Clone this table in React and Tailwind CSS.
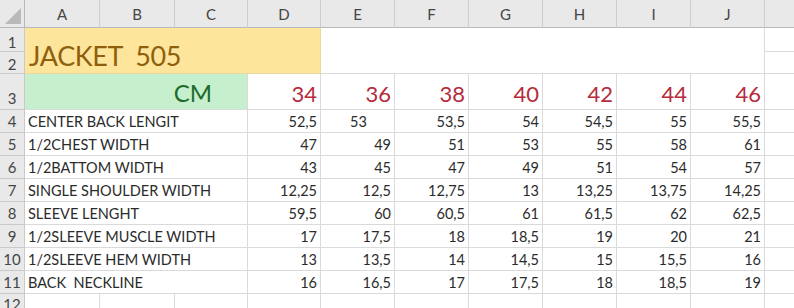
import React from "react";

const cols = ["A", "B", "C", "D", "E", "F", "G", "H", "I", "J"];
const sizes = ["34", "36", "38", "40", "42", "44", "46"];
const rows = [
  ["CENTER BACK LENGIT", ["52,5", "53", "53,5", "54", "54,5", "55", "55,5"]],
  ["1/2CHEST WIDTH", ["47", "49", "51", "53", "55", "58", "61"]],
  ["1/2BATTOM WIDTH", ["43", "45", "47", "49", "51", "54", "57"]],
  ["SINGLE SHOULDER WIDTH", ["12,25", "12,5", "12,75", "13", "13,25", "13,75", "14,25"]],
  ["SLEEVE LENGHT", ["59,5", "60", "60,5", "61", "61,5", "62", "62,5"]],
  ["1/2SLEEVE MUSCLE WIDTH", ["17", "17,5", "18", "18,5", "19", "20", "21"]],
  ["1/2SLEEVE HEM WIDTH", ["13", "13,5", "14", "14,5", "15", "15,5", "16"]],
  ["BACK  NECKLINE", ["16", "16,5", "17", "17,5", "18", "18,5", "19"]],
];

const cell = "border-r border-b border-[#dadada] bg-white";
const rowHead =
  "bg-[#e9e9e9] border-r border-b border-[#c9c9c9] flex items-end justify-center pb-[1px] text-[15px] text-[#454545] leading-none";

export default function App() {
  return (
    <div
      className="w-[794px] h-[308px] overflow-hidden bg-white grid grid-cols-[25px_75px_75px_73px_73px_74px_74px_74px_74px_74px_74px_1fr] grid-rows-[28px_24px_22px_36px_repeat(8,23px)_1fr]"
      style={{ fontFamily: "Lato, 'Open Sans', sans-serif" }}
    >
      {/* header row */}
      <div className="relative bg-[#e9e9e9] border-r border-b border-[#b8b8b8]">
        <div className="absolute right-[3px] bottom-[3px] w-0 h-0 border-l-[16px] border-l-transparent border-b-[16px] border-b-[#b9b9b9]" />
      </div>
      {cols.map((c) => (
        <div
          key={c}
          className="bg-[#e9e9e9] border-r border-b border-r-[#cdcdcd] border-b-[#b8b8b8] flex items-center justify-center text-[15px] text-[#454545] pt-[2px]"
        >
          {c}
        </div>
      ))}
      <div className="bg-[#e9e9e9] border-b border-[#b8b8b8]" />

      {/* row 1 */}
      <div className={rowHead}>1</div>
      <div className="col-span-4 row-span-2 bg-[#fde69b] border-r border-b border-[#e8d8a0] flex items-end pl-[4px] pb-[4px]">
        <span className="text-[27px] leading-none text-[#8f5f0e] tracking-[-0.4px] whitespace-pre">
          JACKET  505
        </span>
      </div>
      <div className="col-span-6 row-span-2 bg-white border-r border-b border-[#dadada]" />
      <div className="bg-white border-b border-[#dadada]" />

      {/* row 2 */}
      <div className={rowHead}>2</div>
      <div className="bg-white border-b border-[#dadada]" />

      {/* row 3 */}
      <div className={rowHead + " pb-[3px]"}>3</div>
      <div className="col-span-3 bg-[#c6efce] border-r border-b border-[#dadada] flex items-end justify-end pr-[35px] pb-[4px]">
        <span className="text-[24px] leading-none text-[#1d6b2b]">CM</span>
      </div>
      {sizes.map((s) => (
        <div key={s} className={cell + " flex items-end justify-end pr-[3px] pb-[4px]"}>
          <span className="text-[22px] leading-none text-[#b52b3b]">{s}</span>
        </div>
      ))}
      <div className="bg-white border-b border-[#dadada]" />

      {/* data rows */}
      {rows.map(([label, vals], i) => (
        <React.Fragment key={label}>
          <div className={rowHead + " pb-[3px]"}>{i + 4}</div>
          <div className={cell + " col-span-3 flex items-end pl-[3px] pb-[3px]"}>
            <span className="text-[14.5px] leading-none text-[#2b2b2b] whitespace-pre">{label}</span>
          </div>
          {vals.map((v, j) => (
            <div
              key={j}
              className={
                cell +
                " flex items-end pb-[3px] " +
                (i === 0 && j === 1 ? "justify-start pl-[29px]" : "justify-end pr-[3px]")
              }
            >
              <span className="text-[14.5px] leading-none text-[#2b2b2b]">{v}</span>
            </div>
          ))}
          <div className="bg-white border-b border-[#dadada]" />
        </React.Fragment>
      ))}

      {/* row 12 */}
      <div className="bg-[#e9e9e9] border-r border-[#c9c9c9] flex items-start justify-center pt-[3px] text-[15px] text-[#454545] leading-none">
        12
      </div>
      {cols.map((c) => (
        <div key={c} className="bg-white border-r border-[#dadada]" />
      ))}
      <div className="bg-white" />
    </div>
  );
}
